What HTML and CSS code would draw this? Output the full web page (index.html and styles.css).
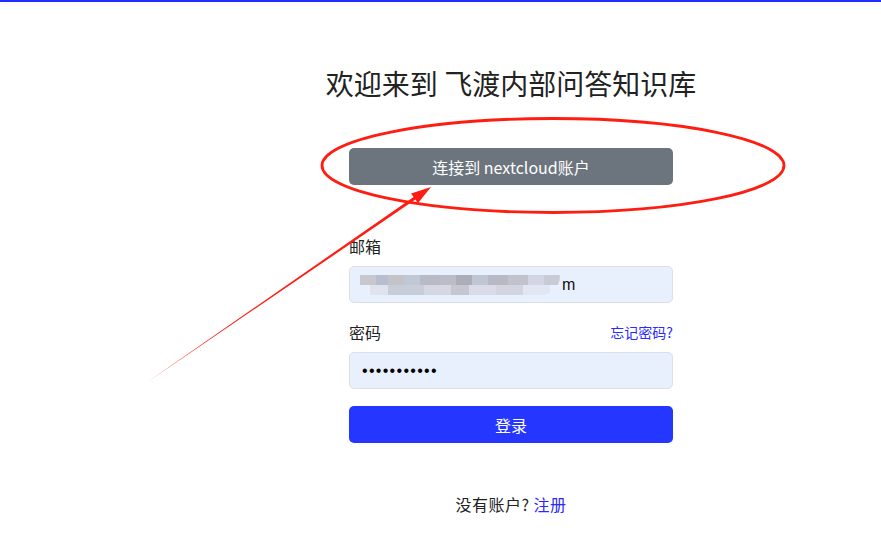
FILE: index.html
```html
<!DOCTYPE html>
<html lang="zh-CN">
<head>
<meta charset="utf-8">
<title>登录</title>
<link rel="stylesheet" href="styles.css">
</head>
<body>
<div class="topbar"></div>
<main class="page">
  <div class="card">
    <h1 class="title">欢迎来到 飞渡内部问答知识库</h1>
    <button class="btn btn-grey">连接到 nextcloud账户</button>
    <label class="label">邮箱</label>
    <div class="field">
      <span class="blur"></span><span class="tail">m</span>
    </div>
    <div class="label-row">
      <label class="label">密码</label>
      <a class="link small">忘记密码?</a>
    </div>
    <div class="field"><span class="dots">•••••••••••</span></div>
    <button class="btn btn-blue">登录</button>
    <p class="signup">没有账户? <a class="link">注册</a></p>
  </div>
</main>
<svg class="annot" width="881" height="534" viewBox="0 0 881 534">
  <ellipse cx="553" cy="165.5" rx="231" ry="47" fill="none" stroke="#ff1d12" stroke-width="2.8"/>
  <polygon points="146,383 413.6,197 411.1,193.4 431,187 417.9,203.2 415.4,199.6" fill="#ff1d12"/>
</svg>
</body>
</html>
```
FILE: styles.css
```css
html, body {
  margin: 0;
  padding: 0;
  background: #fff;
}
body {
  font-family: "Noto Sans CJK SC", "Liberation Sans", sans-serif;
  color: #222;
  width: 881px;
  height: 534px;
  overflow: hidden;
  position: relative;
}
.topbar {
  height: 2px;
  background: #1f2dff;
  box-shadow: 0 2px 6px rgba(0,0,0,0.08);
}
.page {
  display: flex;
  justify-content: center;
  padding-left: 141px;
}
.card {
  width: 324px;
  display: flex;
  flex-direction: column;
}
.title {
  margin: 62px -40px 0;
  font-size: 28px;
  font-weight: 400;
  line-height: 38px;
  text-align: center;
  white-space: nowrap;
  color: #222;
}
.btn {
  height: 37px;
  border: none;
  border-radius: 5px;
  font-family: "Noto Sans CJK SC", "Liberation Sans", sans-serif;
  font-size: 16px;
  color: #fff;
  padding: 0;
}
.btn-grey {
  margin-top: 46px;
  background: #6c757d;
}
.btn-blue {
  margin-top: 17px;
  background: #2536ff;
}
.label {
  font-size: 16px;
  line-height: 24px;
  color: #222;
}
.card > .label {
  margin-top: 49px;
}
.label-row {
  margin-top: 17px;
  display: flex;
  justify-content: space-between;
  align-items: center;
  height: 24px;
}
.link {
  color: #2a2aff;
  text-decoration: none;
}
.small {
  font-size: 14px;
}
.field {
  margin-top: 8px;
  height: 35px;
  border: 1px solid #dbe0e8;
  border-radius: 5px;
  background: #e8f0fe;
  display: flex;
  align-items: center;
  padding-left: 12px;
  font-family: "Liberation Sans", sans-serif;
  font-size: 16px;
  color: #111;
}
.blur {
  display: inline-block;
  width: 200px;
  height: 20px;
  margin-left: -2px;
  background:
    linear-gradient(90deg, #c9c7ce 0 8%, #b9bdd0 8% 14%, #c3c3c8 14% 22%, #c0c8d6 22% 30%, #b8bac6 30% 40%, #bbbcc7 40% 48%, #adadb8 48% 56%, #bfc6d2 56% 64%, #b7b9c4 64% 74%, #c0c2cc 74% 84%, #d3d6e2 84% 92%, #c8cbd6 92% 100%) top / 100% 50% no-repeat,
    linear-gradient(90deg, #e0e3ee 0 10%, #c8cdda 10% 30%, #d5d8e3 30% 45%, #c4c6d0 45% 55%, #d9dce8 55% 70%, #d2d5e0 70% 85%, #e2e6f2 85% 100%) bottom / 90% 50% no-repeat;
  filter: blur(0.6px);
  border-radius: 2px 2px 40px 2px;
}
.tail {
  margin-left: 2px;
}
.dots {
  font-size: 16px;
  letter-spacing: 1.3px;
  color: #000;
}
.signup {
  margin: 49px 0 0;
  text-align: center;
  font-size: 16px;
  line-height: 24px;
  color: #222;
  letter-spacing: 0.5px;
}
.annot {
  position: absolute;
  left: 0;
  top: 0;
  pointer-events: none;
}
```
